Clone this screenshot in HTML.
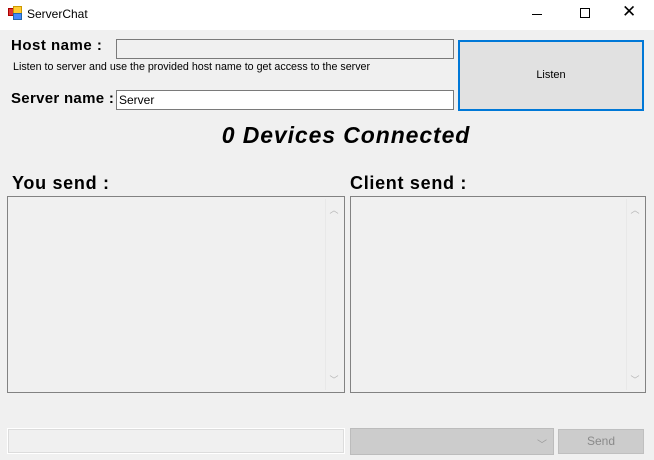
<!DOCTYPE html><html><head><style>
body{margin:0;width:654px;height:460px;background:#f0f0f0;font-family:"Liberation Sans",sans-serif;position:relative;overflow:hidden}
.a{position:absolute}
.tb{border:1px solid #7a7a7a;box-sizing:border-box}
.ta{background:#f0f0f0;border:1px solid #828282;box-sizing:border-box}
.sb{position:absolute;right:2px;top:2px;bottom:2px;width:16px;background:#f0f0f0;border-left:1px solid #e8e8e8;color:#b5b5b5;font-size:9px;text-align:center}
</style></head><body>
<div class="a" style="left:0;top:0;width:654px;height:30px;background:#fff"></div>
<div class="a" style="left:8px;top:8px;width:6px;height:6px;background:#d33;border:1px solid #a00"></div>
<div class="a" style="left:13px;top:6px;width:7px;height:7px;background:#fc3;border:1px solid #c90"></div>
<div class="a" style="left:13px;top:13px;width:7px;height:5px;background:#48f;border:1px solid #26a"></div>
<div class="a" style="left:27px;top:7px;font-size:12px">ServerChat</div>
<div class="a" style="left:532px;top:14px;width:10px;height:1px;background:#000"></div>
<div class="a" style="left:580px;top:8px;width:10px;height:10px;border:1px solid #000;box-sizing:border-box"></div>
<div class="a" style="left:622px;top:2px;font-size:17px;font-weight:300">✕</div>
<div class="a" style="left:11px;top:37px;font-size:15px;font-weight:bold;letter-spacing:0.5px">Host name :</div>
<div class="a tb" style="left:116px;top:39px;width:338px;height:20px;background:#f0f0f0"></div>
<div class="a" style="left:13px;top:61px;font-size:10.7px">Listen to server and use the provided host name to get access to the server</div>
<div class="a" style="left:11px;top:90px;font-size:15px;font-weight:bold;letter-spacing:0.3px">Server name :</div>
<div class="a tb" style="left:116px;top:90px;width:338px;height:20px;background:#fff;font-size:12px;padding:2px 2px">Server</div>
<div class="a" style="left:458px;top:40px;width:186px;height:71px;border:2px solid #0078d7;box-sizing:border-box;background:#e1e1e1;font-size:11px;text-align:center;line-height:67px">Listen</div>
<div class="a" style="left:0;width:654px;top:122px;text-align:center;font-size:23px;font-weight:bold;font-style:italic;padding-left:38px;box-sizing:border-box;letter-spacing:0.9px">0 Devices Connected</div>
<div class="a" style="left:12px;top:173px;font-size:18px;font-weight:bold;letter-spacing:0.7px">You send :</div>
<div class="a" style="left:350px;top:173px;font-size:18px;font-weight:bold;letter-spacing:0.7px">Client send :</div>
<div class="a ta" style="left:7px;top:196px;width:338px;height:197px"><div class="sb"><div style="margin-top:4px">︿</div><div style="position:absolute;bottom:4px;width:16px">﹀</div></div></div>
<div class="a ta" style="left:350px;top:196px;width:296px;height:197px"><div class="sb"><div style="margin-top:4px">︿</div><div style="position:absolute;bottom:4px;width:16px">﹀</div></div></div>
<div class="a" style="left:7px;top:428px;width:338px;height:26px;border:1px solid #fff;box-sizing:border-box;outline:1px solid #dcdcdc;outline-offset:-2px"></div>
<div class="a" style="left:350px;top:428px;width:204px;height:27px;background:#cccccc;border:1px solid #bcbcbc;box-sizing:border-box;color:#999;font-size:10px;text-align:right;padding:7px 6px 0 0">﹀</div>
<div class="a" style="left:558px;top:429px;width:86px;height:25px;background:#cccccc;border:1px solid #bfbfbf;box-sizing:border-box;color:#8a8a8a;font-size:12px;text-align:center;line-height:23px">Send</div>
</body></html>
